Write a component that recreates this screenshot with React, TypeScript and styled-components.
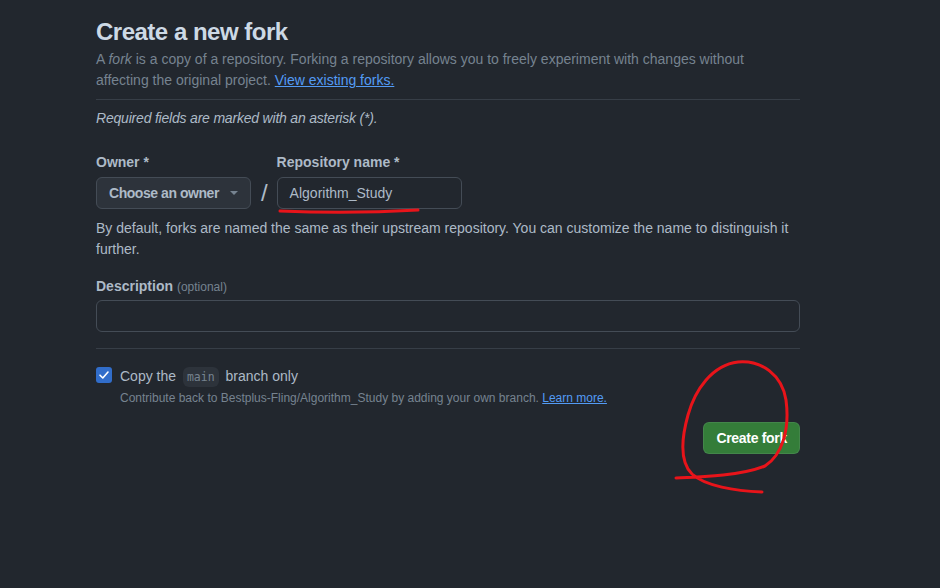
import React from "react";
import styled, { createGlobalStyle } from "styled-components";

const Global = createGlobalStyle`
  html, body { margin: 0; padding: 0; background: #22272e; }
  body { font-family: "Liberation Sans", Arial, sans-serif; color: #adbac7; }
  * { box-sizing: border-box; }
`;

const Page = styled.div`
  position: relative;
  width: 940px;
  height: 588px;
  background: #22272e;
  overflow: hidden;
`;

const Container = styled.main`
  width: 704px;
  margin-left: 96px;
  padding-top: 16px;
  font-size: 14px;
  line-height: 21px;
`;

const Title = styled.h1`
  margin: 0;
  font-size: 24px;
  line-height: 32px;
  font-weight: 600;
  letter-spacing: -0.5px;
  color: #cdd9e5;
`;

const Lead = styled.p`
  margin: 1px 0 0;
  color: #768390;
  a { color: #539bf5; text-decoration: underline; }
`;

const Divider = styled.hr<{ $top: number; $bottom: number }>`
  border: 0;
  border-top: 1px solid #373e47;
  margin: ${(p) => `${p.$top}px 0 ${p.$bottom}px`};
`;

const Note = styled.p`
  margin: 0;
  font-style: italic;
  letter-spacing: -0.2px;
  color: #adbac7;
`;

const FieldRow = styled.div`
  display: flex;
  align-items: flex-end;
  gap: 6px;
  margin-top: 23px;
`;

const Field = styled.div<{ $gap?: number }>`
  display: flex;
  flex-direction: column;
  gap: ${(p) => p.$gap ?? 4}px;
`;

const Label = styled.label`
  font-weight: 600;
  color: #adbac7;
  line-height: 21px;
  span { font-weight: 400; color: #768390; font-size: 12px; }
`;

const SelectButton = styled.button`
  display: flex;
  align-items: center;
  gap: 11px;
  height: 32px;
  padding: 0 12px;
  background: #2d333b;
  border: 1px solid #444c56;
  border-radius: 6px;
  color: #adbac7;
  font: inherit;
  font-weight: 600;
  letter-spacing: -0.45px;
`;

const Caret = styled.span`
  width: 0;
  height: 0;
  border-left: 4px solid transparent;
  border-right: 4px solid transparent;
  border-top: 4px solid #768390;
`;

const Slash = styled.span`
  font-size: 24px;
  line-height: 32px;
  color: #adbac7;
  padding: 0 3px 0 4px;
`;

const TextInput = styled.div<{ $w?: string }>`
  width: ${(p) => p.$w || "100%"};
  height: 32px;
  padding: 0 12px;
  display: flex;
  align-items: center;
  background: #22272e;
  border: 1px solid #444c56;
  border-radius: 6px;
  color: #adbac7;
`;

const Help = styled.p`
  margin: 9px 0 0;
  color: #adbac7;
`;

const DescField = styled(Field)`
  margin-top: 16px;
`;

const CheckRow = styled.div`
  display: flex;
  gap: 8px;
  align-items: flex-start;
  margin-top: 3px;
`;

const Box = styled.span`
  width: 16px;
  height: 16px;
  margin-top: 2px;
  border-radius: 3px;
  background: #316dca;
  display: flex;
  align-items: center;
  justify-content: center;
`;

const CheckText = styled.div`
  display: flex;
  flex-direction: column;
`;

const CheckLabel = styled.div`
  color: #adbac7;
  line-height: 23px;
  code {
    font-family: "DejaVu Sans Mono", "Liberation Mono", monospace;
    font-size: 11.5px;
    background: #2d333b;
    color: #768390;
    border-radius: 6px;
    padding: 3px 4px;
    margin: 0 3px;
  }
`;

const SubNote = styled.div`
  font-size: 12px;
  line-height: 18px;
  color: #768390;
  a { color: #539bf5; text-decoration: underline; }
`;

const Actions = styled.div`
  display: flex;
  justify-content: flex-end;
  margin-top: 15px;
`;

const Primary = styled.button`
  height: 32px;
  padding: 0 12px;
  background: #347d39;
  border: 1px solid rgba(205, 217, 229, 0.1);
  border-radius: 6px;
  color: #ffffff;
  font: inherit;
  font-weight: 600;
  letter-spacing: -0.3px;
`;

const Marks = styled.svg`
  position: absolute;
  left: 0;
  top: 0;
  pointer-events: none;
`;

export default function App() {
  return (
    <Page>
      <Global />
      <Container>
        <Title>Create a new fork</Title>
        <Lead>
          A <em>fork</em> is a copy of a repository. Forking a repository allows you to freely experiment with changes without
          affecting the original project. <a>View existing forks.</a>
        </Lead>
        <Divider $top={8} $bottom={8} />
        <Note>Required fields are marked with an asterisk (*).</Note>
        <FieldRow>
          <Field>
            <Label>Owner *</Label>
            <SelectButton>
              Choose an owner <Caret />
            </SelectButton>
          </Field>
          <Slash>/</Slash>
          <Field>
            <Label>Repository name *</Label>
            <TextInput $w="185px">Algorithm_Study</TextInput>
          </Field>
        </FieldRow>
        <Help>
          By default, forks are named the same as their upstream repository. You can customize the name to distinguish it
          further.
        </Help>
        <DescField $gap={2}>
          <Label>
            Description <span>(optional)</span>
          </Label>
          <TextInput />
        </DescField>
        <Divider $top={16} $bottom={16} />
        <CheckRow>
          <Box>
            <svg width="12" height="12" viewBox="0 0 12 12">
              <path d="M2 6.2 L4.8 9 L10 3" fill="none" stroke="#fff" strokeWidth="1.6" strokeLinecap="round" strokeLinejoin="round" />
            </svg>
          </Box>
          <CheckText>
            <CheckLabel>
              Copy the <code>main</code> branch only
            </CheckLabel>
            <SubNote>
              Contribute back to Bestplus-Fling/Algorithm_Study by adding your own branch. <a>Learn more.</a>
            </SubNote>
          </CheckText>
        </CheckRow>
        <Actions>
          <Primary>Create fork</Primary>
        </Actions>
      </Container>
      <Marks width="940" height="588" viewBox="0 0 940 588">
        <path d="M280 211 Q 350 214 418 210" fill="none" stroke="#e8141a" strokeWidth="3" strokeLinecap="round" />
        <path
          d="M676 478 C 700 477, 740 476, 765 466 C 782 455, 790 430, 786 400 C 782 375, 762 360, 738 362 C 712 365, 695 390, 688 415 C 681 440, 680 462, 692 474 C 705 486, 735 491, 762 492"
          fill="none"
          stroke="#e8141a"
          strokeWidth="3"
          strokeLinecap="round"
        />
      </Marks>
    </Page>
  );
}
